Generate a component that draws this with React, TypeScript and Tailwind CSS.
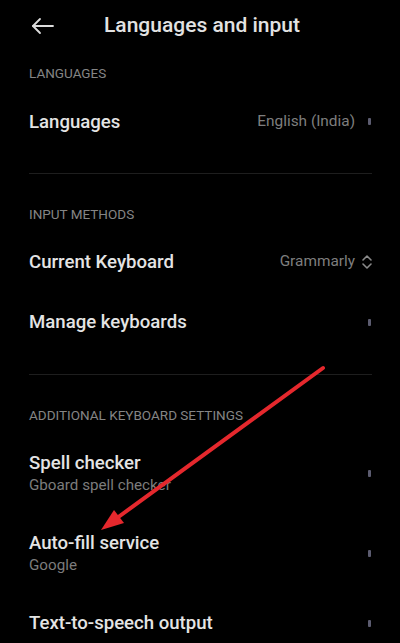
import React from 'react';

interface Row {
  title: string;
  sub?: string;
  value?: string;
  kind: 'dot' | 'updown';
  h: string;
}

const Dot: React.FC = () => <span className="block ml-[13px] mr-[1px] w-[3px] h-[7px] rounded-[1px] bg-[#5c5c70]" />;

const UpDown: React.FC = () => (
  <svg className="ml-[6px] -mr-[1px]" width="12" height="16" viewBox="0 0 12 16" fill="none" stroke="#8a8a8a" strokeWidth="1.6" strokeLinecap="round" strokeLinejoin="round">
    <path d="M2 6 L6 2 L10 6" />
    <path d="M2 10 L6 14 L10 10" />
  </svg>
);

const SettingRow: React.FC<{ row: Row }> = ({ row }) => (
  <div className={`flex items-center justify-between ${row.h}`}>
    <div className="flex flex-col">
      <span className="text-[18.6px] leading-[24px] font-medium text-[#e4e4e4]">{row.title}</span>
      {row.sub && <span className="text-[15.2px] leading-[20px] text-[#7c7c7c]">{row.sub}</span>}
    </div>
    <div className="flex items-center">
      {row.value && <span className="text-[15.4px] text-[#7e7e7e]">{row.value}</span>}
      {row.kind === 'dot' ? <Dot /> : <UpDown />}
    </div>
  </div>
);

const Label: React.FC<{ text: string; className: string }> = ({ text, className }) => (
  <div className={`flex items-center text-[13.5px] text-[#858585] ${className}`}>{text}</div>
);

const App: React.FC = () => {
  return (
    <div className="relative w-[400px] h-[643px] overflow-hidden bg-black" style={{ fontFamily: 'Roboto, "Noto Sans", sans-serif' }}>
      {/* Header */}
      <div className="h-[49px] pt-[3px] flex items-center pl-[31px]">
        <svg width="24" height="18" viewBox="0 0 24 18" fill="none" stroke="#dcdcdc" strokeWidth="1.8" strokeLinecap="round" strokeLinejoin="round">
          <path d="M22 9 H2" />
          <path d="M9 2 L2 9 L9 16" />
        </svg>
        <span className="ml-[49px] text-[21px] font-medium text-[#e2e2e2]">Languages and input</span>
      </div>

      <div className="pl-[29px] pr-[28px]">
        <Label text="LANGUAGES" className="h-[48px]" />
        <SettingRow row={{ title: 'Languages', value: 'English (India)', kind: 'dot', h: 'h-[50px]' }} />
        <div className="mt-[26px] h-px bg-[#1e1e1e]" />

        <Label text="INPUT METHODS" className="mt-[22px] h-[36px]" />
        <SettingRow row={{ title: 'Current Keyboard', value: 'Grammarly', kind: 'updown', h: 'h-[60px]' }} />
        <SettingRow row={{ title: 'Manage keyboards', kind: 'dot', h: 'h-[60px]' }} />
        <div className="mt-[22px] h-px bg-[#1e1e1e]" />

        <Label text="ADDITIONAL KEYBOARD SETTINGS" className="mt-[22px] h-[36px]" />
        <SettingRow row={{ title: 'Spell checker', sub: 'Gboard spell checker', kind: 'dot', h: 'h-[80px]' }} />
        <SettingRow row={{ title: 'Auto-fill service', sub: 'Google', kind: 'dot', h: 'h-[80px]' }} />
        <SettingRow row={{ title: 'Text-to-speech output', kind: 'dot', h: 'h-[60px]' }} />
      </div>

      {/* Red annotation arrow */}
      <svg className="absolute left-0 top-0 pointer-events-none" width="400" height="643" viewBox="0 0 400 643">
        <line x1="323" y1="368" x2="117" y2="518" stroke="#e5282d" strokeWidth="4" strokeLinecap="round" />
        <polygon points="101,530 124,523 114,510" fill="#e5282d" />
      </svg>
    </div>
  );
};

export default App;
